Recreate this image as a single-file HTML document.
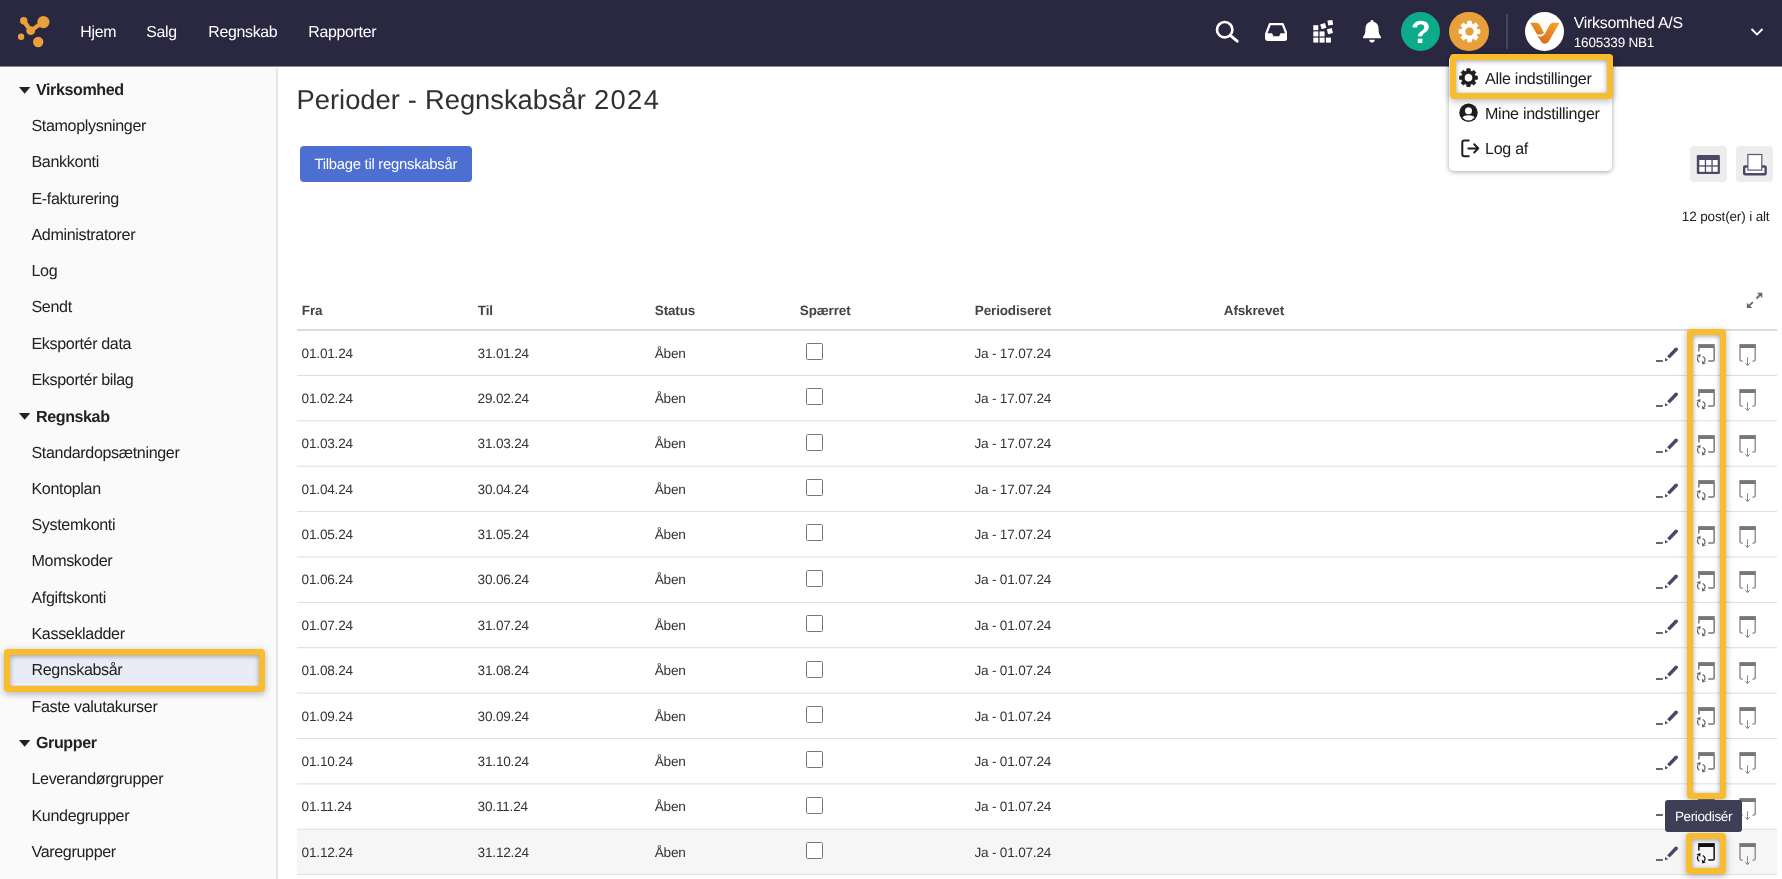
<!DOCTYPE html>
<html lang="da">
<head>
<meta charset="utf-8">
<title>Perioder - Regnskabsår 2024</title>
<style>
*{box-sizing:border-box;}
html,body{margin:0;padding:0;}
html{background:#fff;}
body{width:1782px;height:879px;overflow:hidden;position:relative;will-change:transform;text-rendering:geometricPrecision;font-family:"Liberation Sans",Arial,Helvetica,sans-serif;color:#222;}
.abs{position:absolute;}
#hdr{position:absolute;left:0;top:0;width:1782px;height:66px;background:#2a2840;border-bottom:0;box-shadow:0 1px 0 rgba(42,40,64,.55);z-index:5;}
#hdr .nav{position:absolute;margin-left:.3px;top:22.5px;height:20px;line-height:20px;color:#fff;font-size:15.9px;letter-spacing:-.31px;white-space:nowrap;}
#hdr .circ{position:absolute;top:11.5px;width:39.8px;height:39.8px;border-radius:50%;}
#side{position:absolute;left:0;top:66px;width:278px;height:813px;background:#fafafa;border-right:2px solid #e6e6e6;}
#side .it{position:absolute;left:31.5px;font-size:16.1px;letter-spacing:-.36px;color:#222;white-space:nowrap;height:20px;line-height:20px;}
#side .gr{position:absolute;left:36px;font-size:16.1px;letter-spacing:-.42px;font-weight:bold;color:#222;white-space:nowrap;height:20px;line-height:20px;}
#side .tri{position:absolute;left:19px;}
#side .sel{position:absolute;left:11px;width:248px;height:30px;background:#e9ecf7;}
h1{position:absolute;left:296.6px;top:81.5px;margin:0;font-weight:normal;font-size:27.3px;line-height:36px;color:#303030;white-space:nowrap;letter-spacing:0;word-spacing:.5px;}
h1 span{letter-spacing:1.4px;}
#btn{position:absolute;left:300px;top:146px;width:171.6px;height:35.6px;background:#4c6fd1;border-radius:4px;color:#fff;font-size:14.85px;letter-spacing:-.26px;line-height:39px;text-align:center;white-space:nowrap;}
.sq{position:absolute;top:146px;width:37px;height:35.5px;background:#ededed;border-radius:4px;}
#cnt{position:absolute;right:12.5px;top:209px;font-size:13.5px;letter-spacing:-.14px;line-height:16px;color:#222;white-space:nowrap;}
.th{position:absolute;margin-left:-.2px;top:302.9px;font-weight:bold;font-size:13.5px;letter-spacing:-.15px;line-height:16px;color:#444;white-space:nowrap;}
#hline{position:absolute;left:297px;top:329px;width:1480px;height:2px;background:#dcdcdc;}
.row{position:absolute;left:297px;width:1480px;height:44.4px;font-size:13.6px;letter-spacing:-.2px;color:#333;}
.row.last{background:#f6f6f6;}
.row span{position:absolute;top:15px;line-height:16px;white-space:nowrap;}
.row .c1{left:4.6px}.row .c2{left:180.6px}.row .c3{left:357.7px}.row .c5{left:677.4px}
.row i.cb{position:absolute;left:509px;top:12.4px;width:16.5px;height:17px;border:1px solid #767676;border-radius:1.5px;background:#fff;}
.row svg{position:absolute;overflow:visible;}
.row svg.pen{left:1356px;top:12.43px;}
.row svg.per{left:1397px;top:10.43px;}
.row svg.afs{left:1438px;top:10.43px;}
.hl{position:absolute;border:6px solid #f8bd2e;border-radius:3.5px;box-shadow:0 2px 7px rgba(10,10,40,.3), inset 0 1px 5px rgba(5,5,25,.38);}
#menu{position:absolute;left:1449px;top:55px;width:163px;height:116px;background:#fff;border-radius:5px;box-shadow:0 1px 5px rgba(0,0,0,.35);z-index:6;}
#menu .mi{position:absolute;left:36px;font-size:16.1px;letter-spacing:-.29px;line-height:20px;color:#1c1c1c;white-space:nowrap;}
#menu svg{position:absolute;}
#tip{position:absolute;left:1665px;top:800px;width:77px;height:32px;background:#3e3f57;border-radius:3px;color:#fff;font-size:13.5px;letter-spacing:-.36px;line-height:33.6px;text-align:center;z-index:7;}
</style>
</head>
<body>
<div id="hdr">
<svg class="abs" style="left:14px;top:12px" width="40" height="40" viewBox="0 0 40 40"><g fill="#eaa03c" stroke="#eaa03c"><path d="M9.7 8.7 L16.7 18.7" stroke-width="4.6" stroke-linecap="round" fill="none"/><path d="M16.7 18.7 L29.4 10.1" stroke-width="4.2" fill="none"/><g stroke="none"><circle cx="9.7" cy="8.7" r="3.7"/><circle cx="29.4" cy="10.1" r="6.1"/><circle cx="16.7" cy="18.7" r="4.4"/><circle cx="7.1" cy="24.8" r="3.2"/><circle cx="24.2" cy="30" r="5.2"/></g></g></svg>
<div class="nav" style="left:80px">Hjem</div>
<div class="nav" style="left:146px">Salg</div>
<div class="nav" style="left:208px">Regnskab</div>
<div class="nav" style="left:308px">Rapporter</div>

<!-- search -->
<svg class="abs" style="left:1214px;top:19px" width="26" height="26" viewBox="0 0 26 26"><circle cx="10.7" cy="10.7" r="7.7" fill="none" stroke="#fff" stroke-width="2.6"/><path d="M16.2 16.4 L23.2 22.2" stroke="#fff" stroke-width="2.9" stroke-linecap="round"/></svg>
<!-- inbox -->
<svg class="abs" style="left:1264.5px;top:22.8px" width="22.6" height="17.9" viewBox="0 0 24 19"><path d="M5.2 1.2 H18.8 L22.8 11.5 V16 Q22.8 17.8 21 17.8 H3 Q1.2 17.8 1.2 16 V11.5 Z" fill="none" stroke="#fff" stroke-width="2.4" stroke-linejoin="round"/><path d="M1.2 11 H7.5 L9 14 H15 L16.5 11 H22.8 V17 H1.2Z" fill="#fff"/></svg>
<!-- blocks -->
<svg class="abs" style="left:1313px;top:19px" width="22" height="25" viewBox="0 0 22 25"><g fill="#fff"><rect x="0.3" y="6.2" width="5" height="5"/><rect x="0.3" y="12.4" width="5" height="5"/><rect x="0.3" y="18.6" width="5" height="5"/><rect x="6.6" y="12.4" width="5" height="5"/><rect x="6.6" y="18.6" width="5" height="5"/><rect x="12.9" y="18.6" width="5" height="5"/><rect x="7.8" y="4.6" width="5" height="5" transform="rotate(-18 10.3 7.1)"/><rect x="14.8" y="1.2" width="5" height="5" transform="rotate(-8 17.3 3.7)"/><rect x="14.4" y="9.6" width="5" height="5" transform="rotate(-14 16.9 12.1)"/></g></svg>
<!-- bell -->
<svg class="abs" style="left:1362px;top:19px" width="20" height="25" viewBox="0 0 20 25"><path d="M10 1 Q11.6 1 11.6 2.8 Q16.6 4 16.6 10 Q16.6 15.5 18.8 17.6 Q19.4 18.4 18.6 19.2 H1.4 Q0.6 18.4 1.2 17.6 Q3.4 15.5 3.4 10 Q3.4 4 8.4 2.8 Q8.4 1 10 1Z" fill="#fff"/><path d="M7.2 20.8 H12.8 Q12.4 23.6 10 23.6 Q7.6 23.6 7.2 20.8Z" fill="#fff"/></svg>
<!-- help -->
<div class="circ" style="left:1400.7px;background:#0cab89;"></div>
<div class="abs" style="left:1400.7px;top:11.5px;width:40px;height:40px;line-height:41px;text-align:center;color:#fff;font-weight:bold;font-size:32px;">?</div>
<!-- settings -->
<div class="circ" style="left:1448.9px;background:#e9a03b;"></div>
<svg class="abs" style="left:1456.5px;top:19px" width="25" height="25" viewBox="0 0 24 24"><path fill="#fff" stroke="#fff" stroke-width="0.8" stroke-linejoin="round" fill-rule="evenodd" d="M10.14 4.53 L10.19 2.06 L13.81 2.06 L13.86 4.53 L15.97 5.40 L17.74 3.69 L20.31 6.26 L18.60 8.03 L19.47 10.14 L21.94 10.19 L21.94 13.81 L19.47 13.86 L18.60 15.97 L20.31 17.74 L17.74 20.31 L15.97 18.60 L13.86 19.47 L13.81 21.94 L10.19 21.94 L10.14 19.47 L8.03 18.60 L6.26 20.31 L3.69 17.74 L5.40 15.97 L4.53 13.86 L2.06 13.81 L2.06 10.19 L4.53 10.14 L5.40 8.03 L3.69 6.26 L6.26 3.69 L8.03 5.40Z M7.60 12.00 a4.40 4.40 0 1 0 8.80 0 a4.40 4.40 0 1 0 -8.80 0Z"/></svg>
<div class="abs" style="left:1506px;top:14px;width:2px;height:35px;background:#47455c;"></div>
<!-- avatar -->
<div class="circ" style="left:1524.7px;background:#fff;"></div>
<svg class="abs" style="left:1524.7px;top:11.5px" width="40" height="40" viewBox="0 0 40 40"><defs><linearGradient id="gv" x1="1" y1="0" x2="0.2" y2="1"><stop offset="0" stop-color="#f7a82c"/><stop offset="1" stop-color="#d56c1b"/></linearGradient></defs><path d="M5.2 10.7 H11.3 Q14.2 11 15.8 14.5 L19 21 Q16 23.6 12 22.2 Z" fill="url(#gv)"/><path d="M34.6 10.7 H28.4 Q25.4 11 23.8 14.5 L19.6 22.3 Q16.5 26.2 12.2 23.6 L16.7 30.2 Q20.2 33.6 23.6 29.7 Z" fill="url(#gv)"/></svg>
<div class="abs" style="left:1573.7px;top:13.9px;color:#fff;font-size:15.9px;letter-spacing:-.26px;line-height:20px;white-space:nowrap;">Virksomhed A/S</div>
<div class="abs" style="left:1573.8px;top:35px;color:#fff;font-size:13.5px;letter-spacing:-.2px;line-height:16px;white-space:nowrap;">1605339 NB1</div>
<svg class="abs" style="left:1748.8px;top:25.9px" width="16" height="12" viewBox="0 0 16 12"><path d="M2.5 3 L8 8.5 L13.5 3" fill="none" stroke="#fff" stroke-width="1.9"/></svg>
</div>

<div class="abs" style="left:0;top:66px;width:278px;height:2.3px;background:#fff;z-index:1"></div>
<div id="side">
<svg class="tri" style="top:20.71px" width="12" height="7" viewBox="0 0 12 7"><path d="M0 0 H11.3 L5.65 6.8Z" fill="#222"/></svg>
<div class="gr" style="top:14.31px">Virksomhed</div>
<div class="it" style="top:50.00px">Stamoplysninger</div>
<div class="it" style="top:86.29px">Bankkonti</div>
<div class="it" style="top:122.58px">E-fakturering</div>
<div class="it" style="top:158.87px">Administratorer</div>
<div class="it" style="top:195.16px">Log</div>
<div class="it" style="top:231.45px">Sendt</div>
<div class="it" style="top:267.74px">Eksportér data</div>
<div class="it" style="top:304.03px">Eksportér bilag</div>
<svg class="tri" style="top:347.32px" width="12" height="7" viewBox="0 0 12 7"><path d="M0 0 H11.3 L5.65 6.8Z" fill="#222"/></svg>
<div class="gr" style="top:340.92px">Regnskab</div>
<div class="it" style="top:376.61px">Standardopsætninger</div>
<div class="it" style="top:412.90px">Kontoplan</div>
<div class="it" style="top:449.19px">Systemkonti</div>
<div class="it" style="top:485.48px">Momskoder</div>
<div class="it" style="top:521.77px">Afgiftskonti</div>
<div class="it" style="top:558.06px">Kassekladder</div>
<div class="sel" style="top:586.85px"></div>
<div class="it" style="top:594.35px">Regnskabsår</div>
<div class="it" style="top:630.64px">Faste valutakurser</div>
<svg class="tri" style="top:673.93px" width="12" height="7" viewBox="0 0 12 7"><path d="M0 0 H11.3 L5.65 6.8Z" fill="#222"/></svg>
<div class="gr" style="top:666.93px">Grupper</div>
<div class="it" style="top:703.22px">Leverandørgrupper</div>
<div class="it" style="top:739.51px">Kundegrupper</div>
<div class="it" style="top:775.80px">Varegrupper</div>
</div>
<div class="hl" style="left:4px;top:649.3px;width:261px;height:42.4px;"></div>

<h1>Perioder - Regnskabsår <span>2024</span></h1>
<div id="btn">Tilbage til regnskabsår</div>
<div class="sq" style="left:1690px"></div>
<div class="sq" style="left:1736px"></div>
<svg class="abs" style="left:1690px;top:146px" width="84" height="36" viewBox="1690 146 84 36">
<rect x="1696.8" y="155" width="23.1" height="18.9" rx="1.2" fill="#4b4966"/>
<g fill="#fff"><rect x="1699.3" y="160" width="5.5" height="5.3"/><rect x="1706.1" y="160" width="5.3" height="5.3"/><rect x="1712.7" y="160" width="5" height="5.3"/><rect x="1699.3" y="166.6" width="5.5" height="5.2"/><rect x="1706.1" y="166.6" width="5.3" height="5.2"/><rect x="1712.7" y="166.6" width="5" height="5.2"/></g>
<rect x="1744.2" y="166.5" width="21.4" height="7.8" rx="0.8" fill="#fff" stroke="#4b4966" stroke-width="2.4"/>
<rect x="1747.9" y="154.5" width="13.9" height="15.6" fill="#fff" stroke="#5a5876" stroke-width="1.2"/>
</svg>
<div id="cnt">12 post(er) i alt</div>

<svg class="abs" style="left:1746px;top:292px" width="17" height="17" viewBox="0 0 17 17"><g stroke="#6c6c6c" stroke-width="1.9" fill="#6c6c6c"><path d="M14.5 2.4 L10.5 6.5" fill="none"/><path d="M10.9 0.7 H16.3 V6.1Z" stroke="none"/><path d="M2.6 14.1 L6.9 10.1" fill="none"/><path d="M0.8 10.7 V15.9 H6.3Z" stroke="none"/></g></svg>

<div class="th" style="left:302px">Fra</div>
<div class="th" style="left:478px">Til</div>
<div class="th" style="left:655px">Status</div>
<div class="th" style="left:800px">Spærret</div>
<div class="th" style="left:975px">Periodiseret</div>
<div class="th" style="left:1224px">Afskrevet</div>
<div id="hline"></div>
<div class="row" style="top:330.57px"><span class="c1">01.01.24</span><span class="c2">31.01.24</span><span class="c3">Åben</span><i class="cb"></i><span class="c5">Ja - 17.07.24</span><svg class="pen" width="26" height="20" viewBox="0 0 26 20"><path d="M3 18 H9.8" stroke="#4b4766" stroke-width="1.7" fill="none"/><path d="M12 15.1 L12 18.3 L15.3 16.9Z" fill="#4b4766"/><path d="M15.4 14.4 L23.2 6.2" stroke="#4b4766" stroke-width="3.5" fill="none"/><circle cx="23.2" cy="6.2" r="1.75" fill="#4b4766"/></svg><svg class="per" width="24" height="24" viewBox="0 0 24 24"><rect x="4.1" y="3.1" width="16.7" height="3.9" fill="#777"/><path d="M4.85 7 V10.6 M20.15 7 V19 Q20.15 20 19.15 20 H14.2" stroke="#777" stroke-width="1.5" fill="none"/><path d="M4.3 15.5 Q2.2 18.6 5.3 21.4 M8.7 15.4 Q12.4 17.6 10.3 21.3" stroke="#666" stroke-width="1.2" fill="none"/><path d="M2.4 14.3 L6.6 13.1 L6.3 16.6Z M7.8 19.4 L11.7 22.4 L8.3 23.5Z" fill="#666"/></svg><svg class="afs" width="24" height="24" viewBox="0 0 24 24"><rect x="4.3" y="3.1" width="16.6" height="3.9" fill="#777"/><path d="M5 7 V18.6 Q5 20.1 6.5 20.1 H7.8 M20.2 7 V18.6 Q20.2 20.1 18.7 20.1 H17.4" stroke="#8c8c8c" stroke-width="1.4" fill="none"/><path d="M12.5 16.2 V24.4 M10.2 21.9 L12.5 24.7 L14.8 21.9" stroke="#8c8c8c" stroke-width="1" fill="none"/></svg></div>
<div class="row" style="top:375.95px"><span class="c1">01.02.24</span><span class="c2">29.02.24</span><span class="c3">Åben</span><i class="cb"></i><span class="c5">Ja - 17.07.24</span><svg class="pen" width="26" height="20" viewBox="0 0 26 20"><path d="M3 18 H9.8" stroke="#4b4766" stroke-width="1.7" fill="none"/><path d="M12 15.1 L12 18.3 L15.3 16.9Z" fill="#4b4766"/><path d="M15.4 14.4 L23.2 6.2" stroke="#4b4766" stroke-width="3.5" fill="none"/><circle cx="23.2" cy="6.2" r="1.75" fill="#4b4766"/></svg><svg class="per" width="24" height="24" viewBox="0 0 24 24"><rect x="4.1" y="3.1" width="16.7" height="3.9" fill="#777"/><path d="M4.85 7 V10.6 M20.15 7 V19 Q20.15 20 19.15 20 H14.2" stroke="#777" stroke-width="1.5" fill="none"/><path d="M4.3 15.5 Q2.2 18.6 5.3 21.4 M8.7 15.4 Q12.4 17.6 10.3 21.3" stroke="#666" stroke-width="1.2" fill="none"/><path d="M2.4 14.3 L6.6 13.1 L6.3 16.6Z M7.8 19.4 L11.7 22.4 L8.3 23.5Z" fill="#666"/></svg><svg class="afs" width="24" height="24" viewBox="0 0 24 24"><rect x="4.3" y="3.1" width="16.6" height="3.9" fill="#777"/><path d="M5 7 V18.6 Q5 20.1 6.5 20.1 H7.8 M20.2 7 V18.6 Q20.2 20.1 18.7 20.1 H17.4" stroke="#8c8c8c" stroke-width="1.4" fill="none"/><path d="M12.5 16.2 V24.4 M10.2 21.9 L12.5 24.7 L14.8 21.9" stroke="#8c8c8c" stroke-width="1" fill="none"/></svg></div>
<div class="row" style="top:421.33px"><span class="c1">01.03.24</span><span class="c2">31.03.24</span><span class="c3">Åben</span><i class="cb"></i><span class="c5">Ja - 17.07.24</span><svg class="pen" width="26" height="20" viewBox="0 0 26 20"><path d="M3 18 H9.8" stroke="#4b4766" stroke-width="1.7" fill="none"/><path d="M12 15.1 L12 18.3 L15.3 16.9Z" fill="#4b4766"/><path d="M15.4 14.4 L23.2 6.2" stroke="#4b4766" stroke-width="3.5" fill="none"/><circle cx="23.2" cy="6.2" r="1.75" fill="#4b4766"/></svg><svg class="per" width="24" height="24" viewBox="0 0 24 24"><rect x="4.1" y="3.1" width="16.7" height="3.9" fill="#777"/><path d="M4.85 7 V10.6 M20.15 7 V19 Q20.15 20 19.15 20 H14.2" stroke="#777" stroke-width="1.5" fill="none"/><path d="M4.3 15.5 Q2.2 18.6 5.3 21.4 M8.7 15.4 Q12.4 17.6 10.3 21.3" stroke="#666" stroke-width="1.2" fill="none"/><path d="M2.4 14.3 L6.6 13.1 L6.3 16.6Z M7.8 19.4 L11.7 22.4 L8.3 23.5Z" fill="#666"/></svg><svg class="afs" width="24" height="24" viewBox="0 0 24 24"><rect x="4.3" y="3.1" width="16.6" height="3.9" fill="#777"/><path d="M5 7 V18.6 Q5 20.1 6.5 20.1 H7.8 M20.2 7 V18.6 Q20.2 20.1 18.7 20.1 H17.4" stroke="#8c8c8c" stroke-width="1.4" fill="none"/><path d="M12.5 16.2 V24.4 M10.2 21.9 L12.5 24.7 L14.8 21.9" stroke="#8c8c8c" stroke-width="1" fill="none"/></svg></div>
<div class="row" style="top:466.71px"><span class="c1">01.04.24</span><span class="c2">30.04.24</span><span class="c3">Åben</span><i class="cb"></i><span class="c5">Ja - 17.07.24</span><svg class="pen" width="26" height="20" viewBox="0 0 26 20"><path d="M3 18 H9.8" stroke="#4b4766" stroke-width="1.7" fill="none"/><path d="M12 15.1 L12 18.3 L15.3 16.9Z" fill="#4b4766"/><path d="M15.4 14.4 L23.2 6.2" stroke="#4b4766" stroke-width="3.5" fill="none"/><circle cx="23.2" cy="6.2" r="1.75" fill="#4b4766"/></svg><svg class="per" width="24" height="24" viewBox="0 0 24 24"><rect x="4.1" y="3.1" width="16.7" height="3.9" fill="#777"/><path d="M4.85 7 V10.6 M20.15 7 V19 Q20.15 20 19.15 20 H14.2" stroke="#777" stroke-width="1.5" fill="none"/><path d="M4.3 15.5 Q2.2 18.6 5.3 21.4 M8.7 15.4 Q12.4 17.6 10.3 21.3" stroke="#666" stroke-width="1.2" fill="none"/><path d="M2.4 14.3 L6.6 13.1 L6.3 16.6Z M7.8 19.4 L11.7 22.4 L8.3 23.5Z" fill="#666"/></svg><svg class="afs" width="24" height="24" viewBox="0 0 24 24"><rect x="4.3" y="3.1" width="16.6" height="3.9" fill="#777"/><path d="M5 7 V18.6 Q5 20.1 6.5 20.1 H7.8 M20.2 7 V18.6 Q20.2 20.1 18.7 20.1 H17.4" stroke="#8c8c8c" stroke-width="1.4" fill="none"/><path d="M12.5 16.2 V24.4 M10.2 21.9 L12.5 24.7 L14.8 21.9" stroke="#8c8c8c" stroke-width="1" fill="none"/></svg></div>
<div class="row" style="top:512.09px"><span class="c1">01.05.24</span><span class="c2">31.05.24</span><span class="c3">Åben</span><i class="cb"></i><span class="c5">Ja - 17.07.24</span><svg class="pen" width="26" height="20" viewBox="0 0 26 20"><path d="M3 18 H9.8" stroke="#4b4766" stroke-width="1.7" fill="none"/><path d="M12 15.1 L12 18.3 L15.3 16.9Z" fill="#4b4766"/><path d="M15.4 14.4 L23.2 6.2" stroke="#4b4766" stroke-width="3.5" fill="none"/><circle cx="23.2" cy="6.2" r="1.75" fill="#4b4766"/></svg><svg class="per" width="24" height="24" viewBox="0 0 24 24"><rect x="4.1" y="3.1" width="16.7" height="3.9" fill="#777"/><path d="M4.85 7 V10.6 M20.15 7 V19 Q20.15 20 19.15 20 H14.2" stroke="#777" stroke-width="1.5" fill="none"/><path d="M4.3 15.5 Q2.2 18.6 5.3 21.4 M8.7 15.4 Q12.4 17.6 10.3 21.3" stroke="#666" stroke-width="1.2" fill="none"/><path d="M2.4 14.3 L6.6 13.1 L6.3 16.6Z M7.8 19.4 L11.7 22.4 L8.3 23.5Z" fill="#666"/></svg><svg class="afs" width="24" height="24" viewBox="0 0 24 24"><rect x="4.3" y="3.1" width="16.6" height="3.9" fill="#777"/><path d="M5 7 V18.6 Q5 20.1 6.5 20.1 H7.8 M20.2 7 V18.6 Q20.2 20.1 18.7 20.1 H17.4" stroke="#8c8c8c" stroke-width="1.4" fill="none"/><path d="M12.5 16.2 V24.4 M10.2 21.9 L12.5 24.7 L14.8 21.9" stroke="#8c8c8c" stroke-width="1" fill="none"/></svg></div>
<div class="row" style="top:557.47px"><span class="c1">01.06.24</span><span class="c2">30.06.24</span><span class="c3">Åben</span><i class="cb"></i><span class="c5">Ja - 01.07.24</span><svg class="pen" width="26" height="20" viewBox="0 0 26 20"><path d="M3 18 H9.8" stroke="#4b4766" stroke-width="1.7" fill="none"/><path d="M12 15.1 L12 18.3 L15.3 16.9Z" fill="#4b4766"/><path d="M15.4 14.4 L23.2 6.2" stroke="#4b4766" stroke-width="3.5" fill="none"/><circle cx="23.2" cy="6.2" r="1.75" fill="#4b4766"/></svg><svg class="per" width="24" height="24" viewBox="0 0 24 24"><rect x="4.1" y="3.1" width="16.7" height="3.9" fill="#777"/><path d="M4.85 7 V10.6 M20.15 7 V19 Q20.15 20 19.15 20 H14.2" stroke="#777" stroke-width="1.5" fill="none"/><path d="M4.3 15.5 Q2.2 18.6 5.3 21.4 M8.7 15.4 Q12.4 17.6 10.3 21.3" stroke="#666" stroke-width="1.2" fill="none"/><path d="M2.4 14.3 L6.6 13.1 L6.3 16.6Z M7.8 19.4 L11.7 22.4 L8.3 23.5Z" fill="#666"/></svg><svg class="afs" width="24" height="24" viewBox="0 0 24 24"><rect x="4.3" y="3.1" width="16.6" height="3.9" fill="#777"/><path d="M5 7 V18.6 Q5 20.1 6.5 20.1 H7.8 M20.2 7 V18.6 Q20.2 20.1 18.7 20.1 H17.4" stroke="#8c8c8c" stroke-width="1.4" fill="none"/><path d="M12.5 16.2 V24.4 M10.2 21.9 L12.5 24.7 L14.8 21.9" stroke="#8c8c8c" stroke-width="1" fill="none"/></svg></div>
<div class="row" style="top:602.85px"><span class="c1">01.07.24</span><span class="c2">31.07.24</span><span class="c3">Åben</span><i class="cb"></i><span class="c5">Ja - 01.07.24</span><svg class="pen" width="26" height="20" viewBox="0 0 26 20"><path d="M3 18 H9.8" stroke="#4b4766" stroke-width="1.7" fill="none"/><path d="M12 15.1 L12 18.3 L15.3 16.9Z" fill="#4b4766"/><path d="M15.4 14.4 L23.2 6.2" stroke="#4b4766" stroke-width="3.5" fill="none"/><circle cx="23.2" cy="6.2" r="1.75" fill="#4b4766"/></svg><svg class="per" width="24" height="24" viewBox="0 0 24 24"><rect x="4.1" y="3.1" width="16.7" height="3.9" fill="#777"/><path d="M4.85 7 V10.6 M20.15 7 V19 Q20.15 20 19.15 20 H14.2" stroke="#777" stroke-width="1.5" fill="none"/><path d="M4.3 15.5 Q2.2 18.6 5.3 21.4 M8.7 15.4 Q12.4 17.6 10.3 21.3" stroke="#666" stroke-width="1.2" fill="none"/><path d="M2.4 14.3 L6.6 13.1 L6.3 16.6Z M7.8 19.4 L11.7 22.4 L8.3 23.5Z" fill="#666"/></svg><svg class="afs" width="24" height="24" viewBox="0 0 24 24"><rect x="4.3" y="3.1" width="16.6" height="3.9" fill="#777"/><path d="M5 7 V18.6 Q5 20.1 6.5 20.1 H7.8 M20.2 7 V18.6 Q20.2 20.1 18.7 20.1 H17.4" stroke="#8c8c8c" stroke-width="1.4" fill="none"/><path d="M12.5 16.2 V24.4 M10.2 21.9 L12.5 24.7 L14.8 21.9" stroke="#8c8c8c" stroke-width="1" fill="none"/></svg></div>
<div class="row" style="top:648.23px"><span class="c1">01.08.24</span><span class="c2">31.08.24</span><span class="c3">Åben</span><i class="cb"></i><span class="c5">Ja - 01.07.24</span><svg class="pen" width="26" height="20" viewBox="0 0 26 20"><path d="M3 18 H9.8" stroke="#4b4766" stroke-width="1.7" fill="none"/><path d="M12 15.1 L12 18.3 L15.3 16.9Z" fill="#4b4766"/><path d="M15.4 14.4 L23.2 6.2" stroke="#4b4766" stroke-width="3.5" fill="none"/><circle cx="23.2" cy="6.2" r="1.75" fill="#4b4766"/></svg><svg class="per" width="24" height="24" viewBox="0 0 24 24"><rect x="4.1" y="3.1" width="16.7" height="3.9" fill="#777"/><path d="M4.85 7 V10.6 M20.15 7 V19 Q20.15 20 19.15 20 H14.2" stroke="#777" stroke-width="1.5" fill="none"/><path d="M4.3 15.5 Q2.2 18.6 5.3 21.4 M8.7 15.4 Q12.4 17.6 10.3 21.3" stroke="#666" stroke-width="1.2" fill="none"/><path d="M2.4 14.3 L6.6 13.1 L6.3 16.6Z M7.8 19.4 L11.7 22.4 L8.3 23.5Z" fill="#666"/></svg><svg class="afs" width="24" height="24" viewBox="0 0 24 24"><rect x="4.3" y="3.1" width="16.6" height="3.9" fill="#777"/><path d="M5 7 V18.6 Q5 20.1 6.5 20.1 H7.8 M20.2 7 V18.6 Q20.2 20.1 18.7 20.1 H17.4" stroke="#8c8c8c" stroke-width="1.4" fill="none"/><path d="M12.5 16.2 V24.4 M10.2 21.9 L12.5 24.7 L14.8 21.9" stroke="#8c8c8c" stroke-width="1" fill="none"/></svg></div>
<div class="row" style="top:693.61px"><span class="c1">01.09.24</span><span class="c2">30.09.24</span><span class="c3">Åben</span><i class="cb"></i><span class="c5">Ja - 01.07.24</span><svg class="pen" width="26" height="20" viewBox="0 0 26 20"><path d="M3 18 H9.8" stroke="#4b4766" stroke-width="1.7" fill="none"/><path d="M12 15.1 L12 18.3 L15.3 16.9Z" fill="#4b4766"/><path d="M15.4 14.4 L23.2 6.2" stroke="#4b4766" stroke-width="3.5" fill="none"/><circle cx="23.2" cy="6.2" r="1.75" fill="#4b4766"/></svg><svg class="per" width="24" height="24" viewBox="0 0 24 24"><rect x="4.1" y="3.1" width="16.7" height="3.9" fill="#777"/><path d="M4.85 7 V10.6 M20.15 7 V19 Q20.15 20 19.15 20 H14.2" stroke="#777" stroke-width="1.5" fill="none"/><path d="M4.3 15.5 Q2.2 18.6 5.3 21.4 M8.7 15.4 Q12.4 17.6 10.3 21.3" stroke="#666" stroke-width="1.2" fill="none"/><path d="M2.4 14.3 L6.6 13.1 L6.3 16.6Z M7.8 19.4 L11.7 22.4 L8.3 23.5Z" fill="#666"/></svg><svg class="afs" width="24" height="24" viewBox="0 0 24 24"><rect x="4.3" y="3.1" width="16.6" height="3.9" fill="#777"/><path d="M5 7 V18.6 Q5 20.1 6.5 20.1 H7.8 M20.2 7 V18.6 Q20.2 20.1 18.7 20.1 H17.4" stroke="#8c8c8c" stroke-width="1.4" fill="none"/><path d="M12.5 16.2 V24.4 M10.2 21.9 L12.5 24.7 L14.8 21.9" stroke="#8c8c8c" stroke-width="1" fill="none"/></svg></div>
<div class="row" style="top:738.99px"><span class="c1">01.10.24</span><span class="c2">31.10.24</span><span class="c3">Åben</span><i class="cb"></i><span class="c5">Ja - 01.07.24</span><svg class="pen" width="26" height="20" viewBox="0 0 26 20"><path d="M3 18 H9.8" stroke="#4b4766" stroke-width="1.7" fill="none"/><path d="M12 15.1 L12 18.3 L15.3 16.9Z" fill="#4b4766"/><path d="M15.4 14.4 L23.2 6.2" stroke="#4b4766" stroke-width="3.5" fill="none"/><circle cx="23.2" cy="6.2" r="1.75" fill="#4b4766"/></svg><svg class="per" width="24" height="24" viewBox="0 0 24 24"><rect x="4.1" y="3.1" width="16.7" height="3.9" fill="#777"/><path d="M4.85 7 V10.6 M20.15 7 V19 Q20.15 20 19.15 20 H14.2" stroke="#777" stroke-width="1.5" fill="none"/><path d="M4.3 15.5 Q2.2 18.6 5.3 21.4 M8.7 15.4 Q12.4 17.6 10.3 21.3" stroke="#666" stroke-width="1.2" fill="none"/><path d="M2.4 14.3 L6.6 13.1 L6.3 16.6Z M7.8 19.4 L11.7 22.4 L8.3 23.5Z" fill="#666"/></svg><svg class="afs" width="24" height="24" viewBox="0 0 24 24"><rect x="4.3" y="3.1" width="16.6" height="3.9" fill="#777"/><path d="M5 7 V18.6 Q5 20.1 6.5 20.1 H7.8 M20.2 7 V18.6 Q20.2 20.1 18.7 20.1 H17.4" stroke="#8c8c8c" stroke-width="1.4" fill="none"/><path d="M12.5 16.2 V24.4 M10.2 21.9 L12.5 24.7 L14.8 21.9" stroke="#8c8c8c" stroke-width="1" fill="none"/></svg></div>
<div class="row" style="top:784.37px"><span class="c1">01.11.24</span><span class="c2">30.11.24</span><span class="c3">Åben</span><i class="cb"></i><span class="c5">Ja - 01.07.24</span><svg class="pen" width="26" height="20" viewBox="0 0 26 20"><path d="M3 18 H9.8" stroke="#4b4766" stroke-width="1.7" fill="none"/><path d="M12 15.1 L12 18.3 L15.3 16.9Z" fill="#4b4766"/><path d="M15.4 14.4 L23.2 6.2" stroke="#4b4766" stroke-width="3.5" fill="none"/><circle cx="23.2" cy="6.2" r="1.75" fill="#4b4766"/></svg><svg class="per" width="24" height="24" viewBox="0 0 24 24"><rect x="4.1" y="3.1" width="16.7" height="3.9" fill="#777"/><path d="M4.85 7 V10.6 M20.15 7 V19 Q20.15 20 19.15 20 H14.2" stroke="#777" stroke-width="1.5" fill="none"/><path d="M4.3 15.5 Q2.2 18.6 5.3 21.4 M8.7 15.4 Q12.4 17.6 10.3 21.3" stroke="#666" stroke-width="1.2" fill="none"/><path d="M2.4 14.3 L6.6 13.1 L6.3 16.6Z M7.8 19.4 L11.7 22.4 L8.3 23.5Z" fill="#666"/></svg><svg class="afs" width="24" height="24" viewBox="0 0 24 24"><rect x="4.3" y="3.1" width="16.6" height="3.9" fill="#777"/><path d="M5 7 V18.6 Q5 20.1 6.5 20.1 H7.8 M20.2 7 V18.6 Q20.2 20.1 18.7 20.1 H17.4" stroke="#8c8c8c" stroke-width="1.4" fill="none"/><path d="M12.5 16.2 V24.4 M10.2 21.9 L12.5 24.7 L14.8 21.9" stroke="#8c8c8c" stroke-width="1" fill="none"/></svg></div>
<div class="row last" style="top:829.75px"><span class="c1">01.12.24</span><span class="c2">31.12.24</span><span class="c3">Åben</span><i class="cb"></i><span class="c5">Ja - 01.07.24</span><svg class="pen" width="26" height="20" viewBox="0 0 26 20"><path d="M3 18 H9.8" stroke="#4b4766" stroke-width="1.7" fill="none"/><path d="M12 15.1 L12 18.3 L15.3 16.9Z" fill="#4b4766"/><path d="M15.4 14.4 L23.2 6.2" stroke="#4b4766" stroke-width="3.5" fill="none"/><circle cx="23.2" cy="6.2" r="1.75" fill="#4b4766"/></svg><svg class="per" width="24" height="24" viewBox="0 0 24 24"><rect x="4.1" y="3.1" width="16.7" height="3.9" fill="#111"/><path d="M4.85 7 V10.6 M20.15 7 V19 Q20.15 20 19.15 20 H14.2" stroke="#111" stroke-width="1.5" fill="none"/><path d="M4.3 15.5 Q2.2 18.6 5.3 21.4 M8.7 15.4 Q12.4 17.6 10.3 21.3" stroke="#111" stroke-width="1.2" fill="none"/><path d="M2.4 14.3 L6.6 13.1 L6.3 16.6Z M7.8 19.4 L11.7 22.4 L8.3 23.5Z" fill="#111"/></svg><svg class="afs" width="24" height="24" viewBox="0 0 24 24"><rect x="4.3" y="3.1" width="16.6" height="3.9" fill="#777"/><path d="M5 7 V18.6 Q5 20.1 6.5 20.1 H7.8 M20.2 7 V18.6 Q20.2 20.1 18.7 20.1 H17.4" stroke="#8c8c8c" stroke-width="1.4" fill="none"/><path d="M12.5 16.2 V24.4 M10.2 21.9 L12.5 24.7 L14.8 21.9" stroke="#8c8c8c" stroke-width="1" fill="none"/></svg></div>
<svg class="abs" style="left:297px;top:329px" width="1480" height="550" viewBox="0 0 1480 550"><g fill="#dddddd"><rect x="0" y="45.95" width="1480" height="1"/><rect x="0" y="91.33" width="1480" height="1"/><rect x="0" y="136.71" width="1480" height="1"/><rect x="0" y="182.09" width="1480" height="1"/><rect x="0" y="227.47" width="1480" height="1"/><rect x="0" y="272.85" width="1480" height="1"/><rect x="0" y="318.23" width="1480" height="1"/><rect x="0" y="363.61" width="1480" height="1"/><rect x="0" y="408.99" width="1480" height="1"/><rect x="0" y="454.37" width="1480" height="1"/><rect x="0" y="499.75" width="1480" height="1"/><rect x="0" y="545.13" width="1480" height="1"/></g></svg>

<div class="hl" style="left:1687px;top:329px;width:39px;height:469.5px;"></div>
<div class="hl" style="left:1686px;top:833px;width:40px;height:41px;"></div>
<div id="tip">Periodisér</div>

<div id="menu">
<svg style="left:0;top:0" width="163" height="116" viewBox="0 0 163 116">
<path fill="#1e1e1e" stroke="#1e1e1e" stroke-width="0.9" stroke-linejoin="round" fill-rule="evenodd" d="M17.84 16.00 L17.88 13.85 L21.12 13.85 L21.16 16.00 L23.06 16.79 L24.62 15.30 L26.90 17.58 L25.41 19.14 L26.20 21.04 L28.35 21.08 L28.35 24.32 L26.20 24.36 L25.41 26.26 L26.90 27.82 L24.62 30.10 L23.06 28.61 L21.16 29.40 L21.12 31.55 L17.88 31.55 L17.84 29.40 L15.94 28.61 L14.38 30.10 L12.10 27.82 L13.59 26.26 L12.80 24.36 L10.65 24.32 L10.65 21.08 L12.80 21.04 L13.59 19.14 L12.10 17.58 L14.38 15.30 L15.94 16.79Z M15.20 22.70 a4.30 4.30 0 1 0 8.60 0 a4.30 4.30 0 1 0 -8.60 0Z"/>
<circle cx="19.5" cy="57.8" r="9.25" fill="#1e1e1e"/><circle cx="19.5" cy="55.7" r="3.5" fill="#fff"/>
<path d="M13.5 62.6 Q15 60.2 19.5 60.2 Q24 60.2 25.5 62.6 A7.7 7.7 0 0 1 13.5 62.6Z" fill="#fff"/>
<path d="M19.7 85.4 H15.3 Q13.3 85.4 13.3 87.4 V99.3 Q13.3 101.3 15.3 101.3 H19.7" fill="none" stroke="#1e1e1e" stroke-width="2" stroke-linecap="round"/>
<path d="M19.3 93.4 H29.1 M25.2 89.3 L29.3 93.4 L25.2 97.5" fill="none" stroke="#1e1e1e" stroke-width="2" stroke-linecap="round" stroke-linejoin="round"/>
</svg>
<div class="mi" style="top:13.6px">Alle indstillinger</div>
<div class="mi" style="top:48.6px">Mine indstillinger</div>
<div class="mi" style="top:83.9px">Log af</div>
</div>
<div class="hl" style="left:1450px;top:54px;width:163px;height:45px;z-index:8;"></div>
</body>
</html>
